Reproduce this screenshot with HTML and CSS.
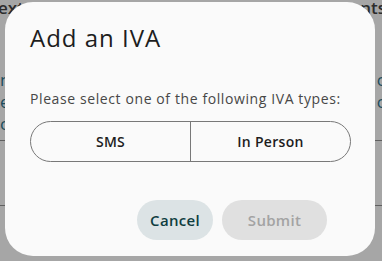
FILE: index.html
```html
<!DOCTYPE html>
<html>
<head>
<meta charset="utf-8">
<link rel="stylesheet" href="styles.css">
</head>
<body>
<div class="page">
  <div class="page-head"><span>ext</span><span>nts</span></div>
  <div class="page-body">
    <p class="row"><span>n</span><span>c</span></p>
    <p class="row"><span>e</span><span>c</span></p>
    <p class="row"><span>c</span><span></span></p>
  </div>
  <div class="rule rule-1"></div>
  <div class="rule rule-2"></div>
</div>

<div class="dialog" role="dialog" aria-labelledby="dlg-title">
  <h1 class="dialog-title" id="dlg-title">Add an IVA</h1>
  <p class="dialog-text">Please select one of the following IVA types:</p>
  <div class="segmented">
    <button class="segment">SMS</button>
    <button class="segment">In Person</button>
  </div>
  <div class="actions">
    <button class="btn btn-cancel">Cancel</button>
    <button class="btn btn-submit" disabled>Submit</button>
  </div>
</div>
</body>
</html>
```

FILE: styles.css
```css
* { box-sizing: border-box; }
html, body { margin: 0; padding: 0; }
body {
  width: 382px;
  height: 261px;
  overflow: hidden;
  background: #a6a6a6;
  font-family: "Open Sans", "Noto Sans", sans-serif;
  position: relative;
}
.page {
  display: flex;
  flex-direction: column;
}
.page-head {
  display: flex;
  justify-content: space-between;
  font-size: 17px;
  font-weight: 600;
  color: #2c2c2c;
  line-height: 16px;
  margin: 0 -4px 0 -2px;
}
.page-body {
  padding-top: 53px;
  display: flex;
  flex-direction: column;
}
.row {
  margin: 0;
  display: flex;
  justify-content: space-between;
  font-size: 17px;
  line-height: 22px;
  color: #1b4c5c;
  margin-right: -3px;
}
.rule { height: 1px; background: #606060; }
.rule-1 { margin-top: 5px; }
.rule-2 { margin-top: 64px; }

.dialog {
  position: absolute;
  left: 5px;
  top: 2px;
  width: 370px;
  height: 254px;
  background: #fafafa;
  border-radius: 28px;
  padding: 20px 24px 0 24px;
  display: flex;
  flex-direction: column;
}
.dialog-title {
  margin: 0;
  font-size: 24px;
  font-weight: 400;
  line-height: 32px;
  letter-spacing: 1px;
  color: #1d1d1d;
  padding-left: 1px;
}
.dialog-text {
  margin: 35px 0 0 1px;
  font-size: 14px;
  line-height: 20px;
  letter-spacing: 0.6px;
  color: #474747;
}
.segmented {
  margin-top: 12px;
  display: flex;
  height: 41px;
  border: 1px solid #787878;
  border-radius: 21px;
  overflow: hidden;
  margin-left: 1px;
}
.segment {
  flex: 1;
  border: 0;
  background: transparent;
  font-family: inherit;
  font-size: 14px;
  font-weight: 600;
  letter-spacing: 0.3px;
  color: #1d1d1d;
  padding: 0;
}
.segment + .segment { border-left: 1px solid #787878; }
.actions {
  margin-top: 38px;
  display: flex;
  justify-content: flex-end;
  gap: 9px;
  padding-right: 24px;
}
.btn {
  height: 40px;
  border: 0;
  border-radius: 20px;
  font-family: inherit;
  font-size: 15px;
  font-weight: 600;
  letter-spacing: 0.3px;
}
.btn-cancel {
  width: 76px;
  background: #dce3e5;
  color: #0f3d40;
}
.btn-submit {
  width: 105px;
  background: #e0e0e0;
  color: #a3a3a3;
}
```
